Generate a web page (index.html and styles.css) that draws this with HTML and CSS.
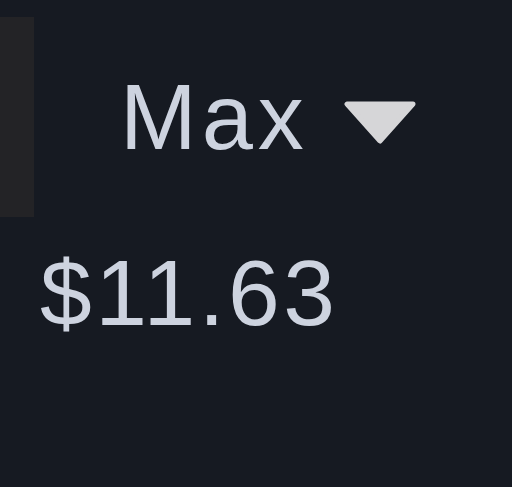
FILE: index.html
```html
<!DOCTYPE html>
<html>
<head>
<meta charset="utf-8">
<link rel="stylesheet" href="styles.css">
</head>
<body>
<div class="top">
  <div class="panel"></div>
  <div class="select">
    <span class="label">Max</span>
    <svg class="caret" width="72" height="46" viewBox="0 0 72 46"><polygon points="3,5 69,5 36,42" fill="#d6d6d8" stroke="#d6d6d8" stroke-width="5" stroke-linejoin="round"/></svg>
  </div>
</div>
<div class="price">$11.63</div>
</body>
</html>
```
FILE: styles.css
```css
html, body {
  margin: 0;
  padding: 0;
  background: #161a22;
  width: 512px;
  height: 487px;
  overflow: hidden;
  font-family: "Liberation Sans", Arial, sans-serif;
  color: #cdd3df;
}
.top {
  display: flex;
  align-items: center;
  padding-top: 17px;
}
.panel {
  width: 34px;
  height: 200px;
  background: #232326;
}
.select {
  display: flex;
  align-items: center;
  margin-left: 86px;
  gap: 35px;
}
.label {
  font-size: 92px;
  line-height: 108px;
  letter-spacing: 5px;
}
.caret {
  display: block;
  margin-top: 10px;
}
.price {
  font-size: 93px;
  line-height: 108px;
  margin-top: 22px;
  padding-left: 40px;
  letter-spacing: 3.5px;
}
```
